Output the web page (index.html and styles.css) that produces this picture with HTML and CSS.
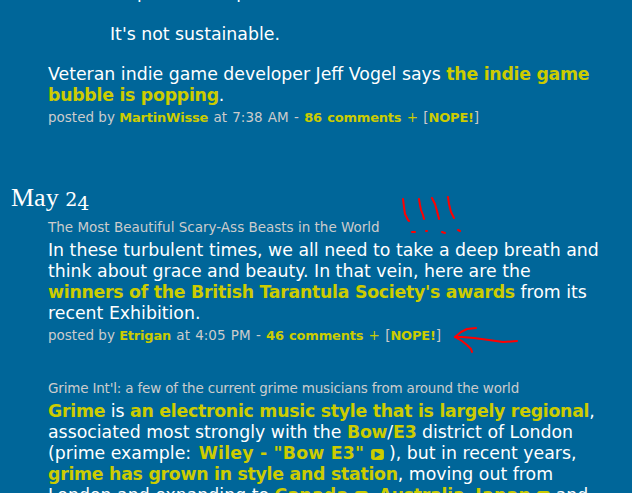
FILE: index.html
```html
<!DOCTYPE html>
<html lang="en">
<head>
<meta charset="utf-8">
<title>MetaFilter</title>
<link rel="stylesheet" href="styles.css">
</head>
<body>
<div class="page">
  <section class="post first">
    <blockquote class="quote">
      <p class="cut">So pass it all up</p>
      <p>It's not sustainable.</p>
    </blockquote>
    <div class="copy">Veteran indie game developer Jeff Vogel says <a href="#">the indie game bubble is popping</a>.</div>
    <div class="meta"><span class="by">posted by </span><a href="#">MartinWisse</a> at 7:38 AM - <a href="#">86 comments</a> <span class="plus">+</span> [<a href="#">NOPE!</a>]</div>
  </section>

  <h2 class="date">May <span class="num">2</span><span class="num low">4</span></h2>

  <section class="post">
    <div class="title">The Most Beautiful Scary-Ass Beasts in the World</div>
    <div class="copy">In these turbulent times, we all need to take a deep breath and think about grace and beauty. In that vein, here are the <a href="#">winners of the British Tarantula Society's awards</a> from its recent Exhibition.</div>
    <div class="meta"><span class="by">posted by </span><a href="#">Etrigan</a> at 4:05 PM - <a href="#">46 comments</a> <span class="plus">+</span> [<a href="#">NOPE!</a>]</div>
  </section>

  <section class="post third">
    <div class="title tight">Grime Int'l: a few of the current grime musicians from around the world</div>
    <div class="copy"><a href="#">Grime</a> is <a href="#">an electronic music style that is largely regional</a>, associated most strongly with the <a href="#">Bow</a>/<a href="#">E3</a> district of London (prime example: <a class="media wiley" href="#">Wiley - "Bow E3" <svg class="play" viewBox="0 0 14 12"><rect width="14" height="12" rx="3" fill="#cc0"/><path d="M4 2.5l6.500 3.500-6.500 3.500z" fill="#069"/></svg></a> ), but in recent years, <a href="#">grime has grown in style and station</a>, moving out from London and expanding to <a class="media" href="#">Canada <svg class="play" viewBox="0 0 14 12"><rect width="14" height="12" rx="3" fill="#cc0"/><path d="M4 2.5l6.500 3.500-6.500 3.500z" fill="#069"/></svg></a>, <a href="#">Australia</a>, <a class="media" href="#">Japan <svg class="play" viewBox="0 0 14 12"><rect width="14" height="12" rx="3" fill="#cc0"/><path d="M4 2.5l6.500 3.500-6.500 3.500z" fill="#069"/></svg></a> and more.</div>
  </section>
</div>
<svg class="scribble" viewBox="0 0 632 493" aria-hidden="true">
  <g fill="none" stroke="#f00" stroke-width="2" stroke-linecap="round" stroke-linejoin="round">
    <path d="M403 199l1 8 1 7 3 6 1 1"/>
    <path d="M419 199l1 6 1 5 2 5 1 4"/>
    <path d="M432 198l3 6 2 7 2 8"/>
    <path d="M448 197l1 7 2 8 3 6"/>
    <path d="M412 232h3M426 231h1M442 232l3 1M458 230l2 1"/>
    <path d="M517 341l-14 1-14-2-15-2-12-1-7 0"/>
    <path d="M455 337l6-5 6-3 9-1"/>
    <path d="M455 337l7 4 5 4 4 4 1 3"/>
  </g>
</svg>
</body>
</html>
```

FILE: styles.css
```css
html, body {
  margin: 0;
  padding: 0;
  height: 100%;
  overflow: hidden;
  background: #006699;
}
body {
  position: relative;
  color: #fff;
  font-family: "DejaVu Sans", Verdana, sans-serif;
  font-size: 17.33px;
  line-height: 21px;
}
.page {
  margin-top: -18px;
  padding-right: 24px;
}
.post {
  margin-left: 48px;
}
.quote {
  margin: 0 0 19px 62px;
}
.quote p {
  margin: 0;
}
.quote .cut {
  margin-bottom: 21px;
}
.copy a {
  color: #cccc00;
  font-weight: bold;
  letter-spacing: -0.27px;
  text-decoration: none;
}
.copy .media {
  letter-spacing: 0.2px;
}
.copy .wiley {
  margin-left: 2px;
}
.meta, .title {
  font-size: 13.5px;
  line-height: 18px;
  color: #cccccc;
}
.meta {
  margin-top: 2px;
  word-spacing: 1px;
}
.by {
  word-spacing: 0;
}
.meta a {
  color: #cccc00;
  font-size: 13px;
  font-weight: bold;
  letter-spacing: -0.2px;
  text-decoration: none;
}
.plus {
  color: #cccc00;
}
.title {
  margin-bottom: 4px;
}
.tight {
  letter-spacing: -0.18px;
}
.date {
  margin: 56px 0 4px 11px;
  font-family: "Liberation Serif", Georgia, serif;
  font-size: 26px;
  line-height: 30px;
  font-weight: normal;
}
.num {
  font-family: "DejaVu Serif", Georgia, serif;
  font-size: 19px;
}
.low {
  vertical-align: -4px;
  line-height: 1;
}
.third {
  margin-top: 34px;
}
.play {
  display: inline-block;
  width: 13px;
  height: 11px;
  vertical-align: -1px;
}
.scribble {
  position: absolute;
  left: 0;
  top: 0;
  width: 632px;
  height: 493px;
  pointer-events: none;
}
```
